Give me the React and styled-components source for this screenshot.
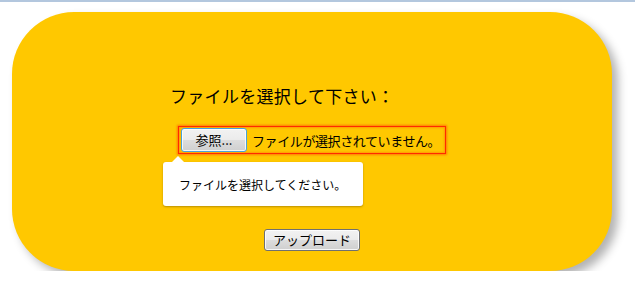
import React from 'react';
import styled, { createGlobalStyle } from 'styled-components';

const GlobalStyle = createGlobalStyle`
  body {
    margin: 0;
    background: #ffffff;
    font-family: "Noto Sans CJK JP", "Noto Sans", sans-serif;
    border-top: 2px solid #b3c7de;
  }
`;

const Card = styled.div`
  margin: 10px 0 0 12px;
  width: 600px;
  height: 259px;
  box-sizing: border-box;
  background-color: #ffc800;
  border-radius: 62px;
  box-shadow: 6px 6px 10px rgba(0, 0, 0, 0.3);
  padding: 72px 0 0 158px;
  position: relative;
`;

const Heading = styled.h2`
  margin: 0;
  font-size: 17px;
  font-weight: normal;
  line-height: 24px;
  color: #000;
  letter-spacing: 0.3px;
`;

const FileRow = styled.div`
  margin: 18px 0 0 8px;
  display: inline-flex;
  align-items: center;
  gap: 5px;
  width: 268px;
  height: 28px;
  box-sizing: border-box;
  border: 1px solid #ff2a00;
  box-shadow: 0 0 2px 1px #ff7a00, inset 0 0 2px 1px #ff9a00;
  padding-left: 2px;
  position: relative;
`;

const Button = styled.button`
  font-family: "Noto Sans CJK JP", "Noto Sans", sans-serif;
  font-size: 13px;
  line-height: 16px;
  height: ${p => p.$h}px;
  width: ${p => p.$w}px;
  flex-shrink: 0;
  padding: 0;
  color: #000;
  border: 1px solid ${p => (p.$focus ? '#4aa3d8' : '#707070')};
  border-radius: 3px;
  background: linear-gradient(#f2f2f2 0%, #ebebeb 50%, #dddddd 51%, #cfcfcf 100%);
  box-shadow: inset 0 0 0 1px rgba(255, 255, 255, 0.8);
`;

const Status = styled.span`
  font-size: 13px;
  letter-spacing: -0.4px;
  white-space: nowrap;
  color: #000;
`;

const Tooltip = styled.div`
  position: absolute;
  top: 35px;
  left: -16px;
  width: 200px;
  height: 44px;
  box-sizing: border-box;
  background: #ffffff;
  border-radius: 3px;
  box-shadow: 0 1px 2px rgba(120, 90, 0, 0.5);
  font-size: 12px;
  color: #000;
  display: flex;
  align-items: center;
  padding-left: 16px;
  &::before {
    content: '';
    position: absolute;
    top: -6px;
    left: 9px;
    border-left: 6px solid transparent;
    border-right: 6px solid transparent;
    border-bottom: 6px solid #ffffff;
  }
`;

const Footer = styled.div`
  position: absolute;
  left: 0;
  right: 0;
  bottom: 20px;
  display: flex;
  justify-content: center;
`;

export default function App() {
  return (
    <>
      <GlobalStyle />
      <Card>
        <Heading>ファイルを選択して下さい：</Heading>
        <FileRow>
          <Button $w={66} $h={24} $focus>参照...</Button>
          <Status>ファイルが選択されていません。</Status>
          <Tooltip>ファイルを選択してください。</Tooltip>
        </FileRow>
        <Footer>
          <Button $w={96} $h={22}>アップロード</Button>
        </Footer>
      </Card>
    </>
  );
}
